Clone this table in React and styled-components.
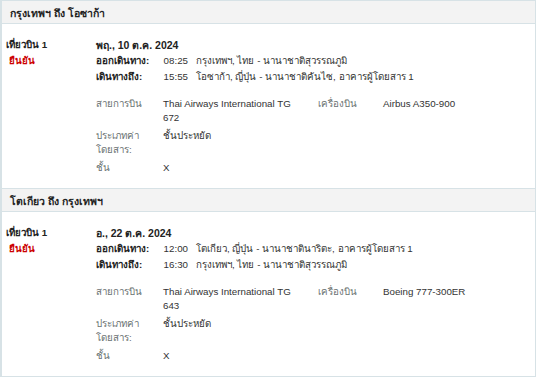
import React from "react";
import styled, { createGlobalStyle } from "styled-components";

const Global = createGlobalStyle`
  html, body { margin: 0; padding: 0; background: #fff; }
  body { font-family: "Liberation Sans", Arial, sans-serif; font-size: 9.75px; color: #333; }
`;

const Wrapper = styled.div`
  width: 536px;
  box-sizing: border-box;
  border: 1px solid #d7e2e6;
  border-left-width: 2px;
`;

const SectionHeader = styled.div`
  box-sizing: border-box;
  display: flex;
  align-items: center;
  padding: 2px 0 0 8px;
  background: #f3f3f3;
  border-bottom: 1px solid #d7e2e6;
  border-top: ${(p) => (p.$first ? "none" : "1px solid #d7e2e6")};
  height: ${(p) => (p.$first ? "23px" : "24px")};
  font-size: 10.5px;
  font-weight: bold;
  color: #222;
`;

const Content = styled.div`
  display: flex;
  padding: 13px 0 13px 4px;
`;

const LeftCol = styled.div`
  width: 90px;
  flex: none;
  line-height: 16px;
`;

const FlightNo = styled.div`
  font-weight: bold;
  color: #222;
`;

const Status = styled.div`
  font-weight: bold;
  color: #cc0000;
  padding-left: 3px;
`;

const MainCol = styled.div`
  flex: 1;
  display: flex;
  flex-direction: column;
  gap: 12px;
`;

const Schedule = styled.div`
  display: grid;
  grid-template-columns: 64px 28px 1fr;
  line-height: 16px;
`;

const DateText = styled.div`
  grid-column: 1 / -1;
  font-size: 10.5px;
  font-weight: bold;
  color: #222;
`;

const SchedLabel = styled.div`
  font-weight: bold;
  color: #222;
  white-space: nowrap;
`;

const Time = styled.div`
  text-align: right;
`;

const Place = styled.div`
  padding-left: 8px;
  white-space: nowrap;
`;

const Details = styled.div`
  display: grid;
  grid-template-columns: 67px 155px 65px 1fr;
  row-gap: 4px;
  line-height: 14px;
`;

const Label = styled.div`
  color: #6a7272;
`;

const Value = styled.div`
  padding-right: 15px;
`;

const flights = [
  {
    title: "กรุงเทพฯ ถึง โอซาก้า",
    date: "พฤ., 10 ต.ค. 2024",
    dep: "08:25",
    depPlace: "กรุงเทพฯ, ไทย - นานาชาติสุวรรณภูมิ",
    arr: "15:55",
    arrPlace: "โอซาก้า, ญี่ปุ่น - นานาชาติคันไซ, อาคารผู้โดยสาร 1",
    airline: "Thai Airways International TG 672",
    aircraft: "Airbus A350-900",
  },
  {
    title: "โตเกียว ถึง กรุงเทพฯ",
    date: "อ., 22 ต.ค. 2024",
    dep: "12:00",
    depPlace: "โตเกียว, ญี่ปุ่น - นานาชาตินาริตะ, อาคารผู้โดยสาร 1",
    arr: "16:30",
    arrPlace: "กรุงเทพฯ, ไทย - นานาชาติสุวรรณภูมิ",
    airline: "Thai Airways International TG 643",
    aircraft: "Boeing 777-300ER",
  },
];

export default function App() {
  return (
    <>
      <Global />
      <Wrapper>
        {flights.map((f, i) => (
          <section key={i}>
            <SectionHeader $first={i === 0}>{f.title}</SectionHeader>
            <Content>
              <LeftCol>
                <FlightNo>เที่ยวบิน 1</FlightNo>
                <Status>ยืนยัน</Status>
              </LeftCol>
              <MainCol>
                <Schedule>
                  <DateText>{f.date}</DateText>
                  <SchedLabel>ออกเดินทาง:</SchedLabel>
                  <Time>{f.dep}</Time>
                  <Place>{f.depPlace}</Place>
                  <SchedLabel>เดินทางถึง:</SchedLabel>
                  <Time>{f.arr}</Time>
                  <Place>{f.arrPlace}</Place>
                </Schedule>
                <Details>
                  <Label>สายการบิน</Label>
                  <Value>{f.airline}</Value>
                  <Label>เครื่องบิน</Label>
                  <Value>{f.aircraft}</Value>
                  <Label>
                    ประเภทค่า
                    <br />
                    โดยสาร:
                  </Label>
                  <Value>ชั้นประหยัด</Value>
                  <div />
                  <div />
                  <Label>ชั้น</Label>
                  <Value>X</Value>
                  <div />
                  <div />
                </Details>
              </MainCol>
            </Content>
          </section>
        ))}
      </Wrapper>
    </>
  );
}
